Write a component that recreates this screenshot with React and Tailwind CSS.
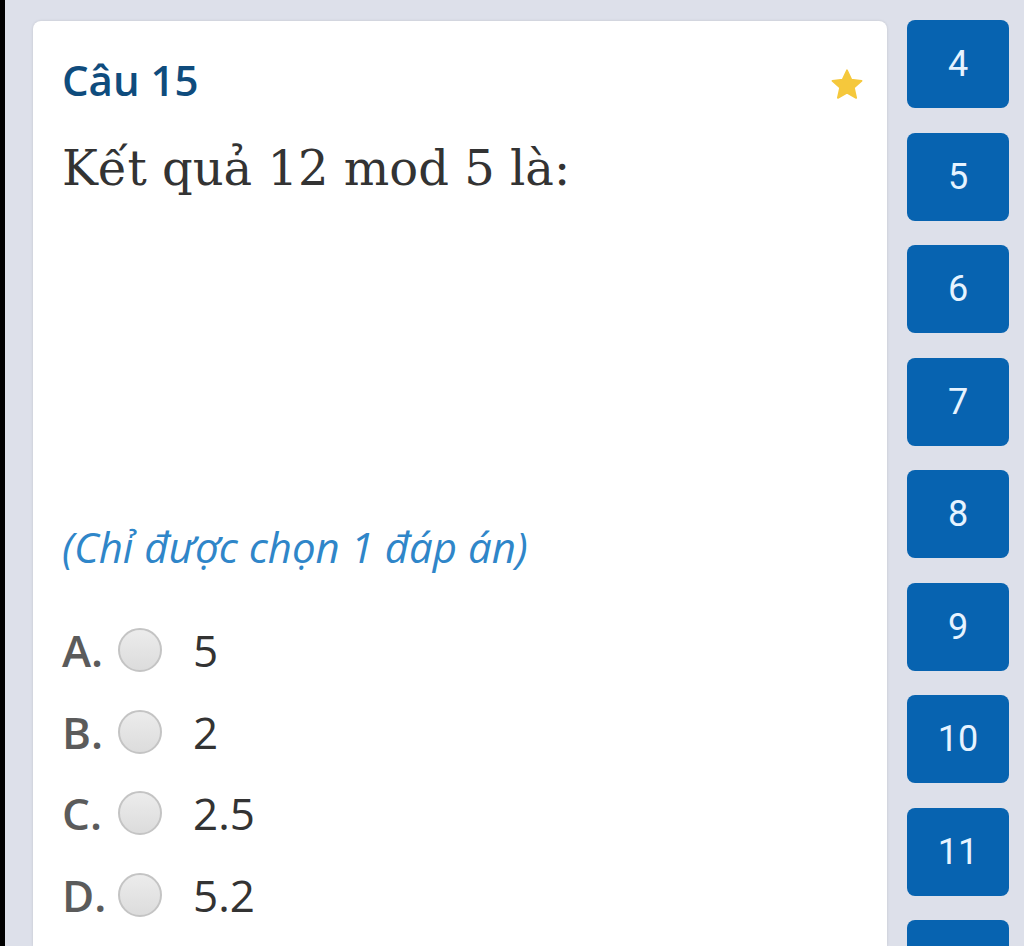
import React from 'react';

const buttons = [4, 5, 6, 7, 8, 9, 10, 11, 12];

const options = [
  { key: 'A', value: '5' },
  { key: 'B', value: '2' },
  { key: 'C', value: '2.5' },
  { key: 'D', value: '5.2' },
];

function Star() {
  return (
    <svg width="36" height="36" viewBox="0 0 24 24">
      <path
        d="M12 2.2l2.9 6.3 6.8.7-5.1 4.6 1.5 6.8L12 17.1l-6.1 3.5 1.5-6.8-5.1-4.6 6.8-.7z"
        fill="#f5c83c"
        stroke="#f5c83c"
        strokeLinejoin="round"
        strokeWidth="1.2"
      />
    </svg>
  );
}

function Radio() {
  return (
    <span className="inline-block w-[44px] h-[44px] rounded-full border-2 border-[#c4c4c4] bg-gradient-to-b from-[#ececec] to-[#dcdcdc] shrink-0" />
  );
}

export default function App() {
  return (
    <div className="flex h-[946px] w-[1024px] overflow-hidden bg-[#dde0ea]">
      <div className="w-[5px] bg-black shrink-0" />

      <div className="flex flex-1 pl-[28px] pt-[21px] gap-[20px]">
        {/* Question card */}
        <div className="w-[854px] shrink-0 bg-white rounded-t-[8px] shadow-[0_0_3px_rgba(0,0,0,0.12)] pl-[29px] pr-[20px] pt-[30px] flex flex-col">
          <div className="flex items-start justify-between">
            <h2 className="font-['Open_Sans',sans-serif] font-semibold text-[42px] leading-[58px] text-[#0f4c7d]">
              Câu 15
            </h2>
            <div className="mt-[16px] mr-[2px]">
              <Star />
            </div>
          </div>

          <p className="mt-[27px] font-['DejaVu_Serif',serif] text-[48px] leading-[64px] text-[#333333] whitespace-nowrap">
            Kết quả 12 mod 5 là:
          </p>

          <p className="mt-[319px] font-['Open_Sans',sans-serif] italic text-[42px] leading-[56px] text-[#2f86c9] whitespace-nowrap">
            (Chỉ được chọn 1 đáp án)
          </p>

          <div className="mt-[45px] flex flex-col gap-[21.5px]">
            {options.map((o) => (
              <div key={o.key} className="flex items-center h-[60px] font-['Open_Sans',sans-serif] text-[44px]">
                <span className="w-[56px] font-semibold text-[#5b5b5b]">{o.key}.</span>
                <Radio />
                <span className="ml-[31px] text-[#333333]">{o.value}</span>
              </div>
            ))}
          </div>
        </div>

        {/* Question nav */}
        <div className="w-[102px] shrink-0 flex flex-col gap-[24.5px] -mt-[1px]">
          {buttons.map((n) => (
            <button
              key={n}
              className="h-[88px] w-full shrink-0 rounded-[8px] bg-[#0763b0] text-[#e6f3ff] font-['Roboto',sans-serif] text-[36px] flex items-center justify-center"
            >
              <span className="leading-none">{n}</span>
            </button>
          ))}
        </div>
      </div>
    </div>
  );
}
